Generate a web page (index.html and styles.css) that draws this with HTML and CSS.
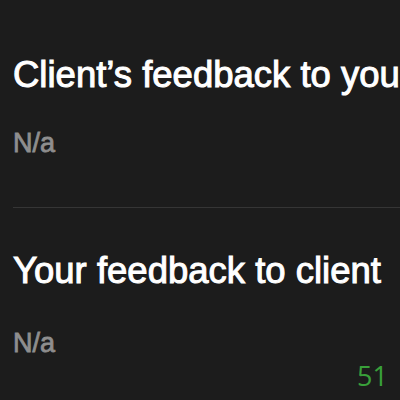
FILE: index.html
```html
<!DOCTYPE html>
<html>
<head>
<meta charset="utf-8">
<link rel="stylesheet" href="styles.css">
</head>
<body>
<div class="page">
  <section class="block first">
    <h2 class="title">Client’s feedback to you</h2>
    <p class="value">N/a</p>
  </section>
  <section class="block second">
    <h2 class="title">Your feedback to client</h2>
    <p class="value">N/a</p>
  </section>
  <div class="count">51</div>
</div>
</body>
</html>
```
FILE: styles.css
```css
html, body {
  margin: 0;
  padding: 0;
  background: #1c1c1c;
}
.page {
  width: 400px;
  height: 400px;
  overflow: hidden;
  position: relative;
  font-family: "Liberation Sans", Arial, sans-serif;
}
.block {
  margin-left: 13px;
}
.first {
  padding-top: 53px;
  padding-bottom: 48px;
  border-bottom: 1px solid #353535;
}
.second {
  padding-top: 41px;
}
.title {
  margin: 0;
  color: #ffffff;
  font-size: 36.5px;
  font-weight: 400;
  line-height: 44px;
  white-space: nowrap;
  -webkit-text-stroke: 1px #ffffff;
}
.value {
  margin: 30px 0 0 0;
  color: #8e8e8e;
  font-size: 27px;
  font-weight: 400;
  line-height: 32px;
  -webkit-text-stroke: 0.8px #8e8e8e;
}
.second .value {
  margin-top: 34px;
}
.count {
  position: absolute;
  right: 12px;
  bottom: 9px;
  color: #39a03a;
  font-family: "Open Sans", sans-serif;
  font-size: 27px;
  line-height: 30px;
}
```
